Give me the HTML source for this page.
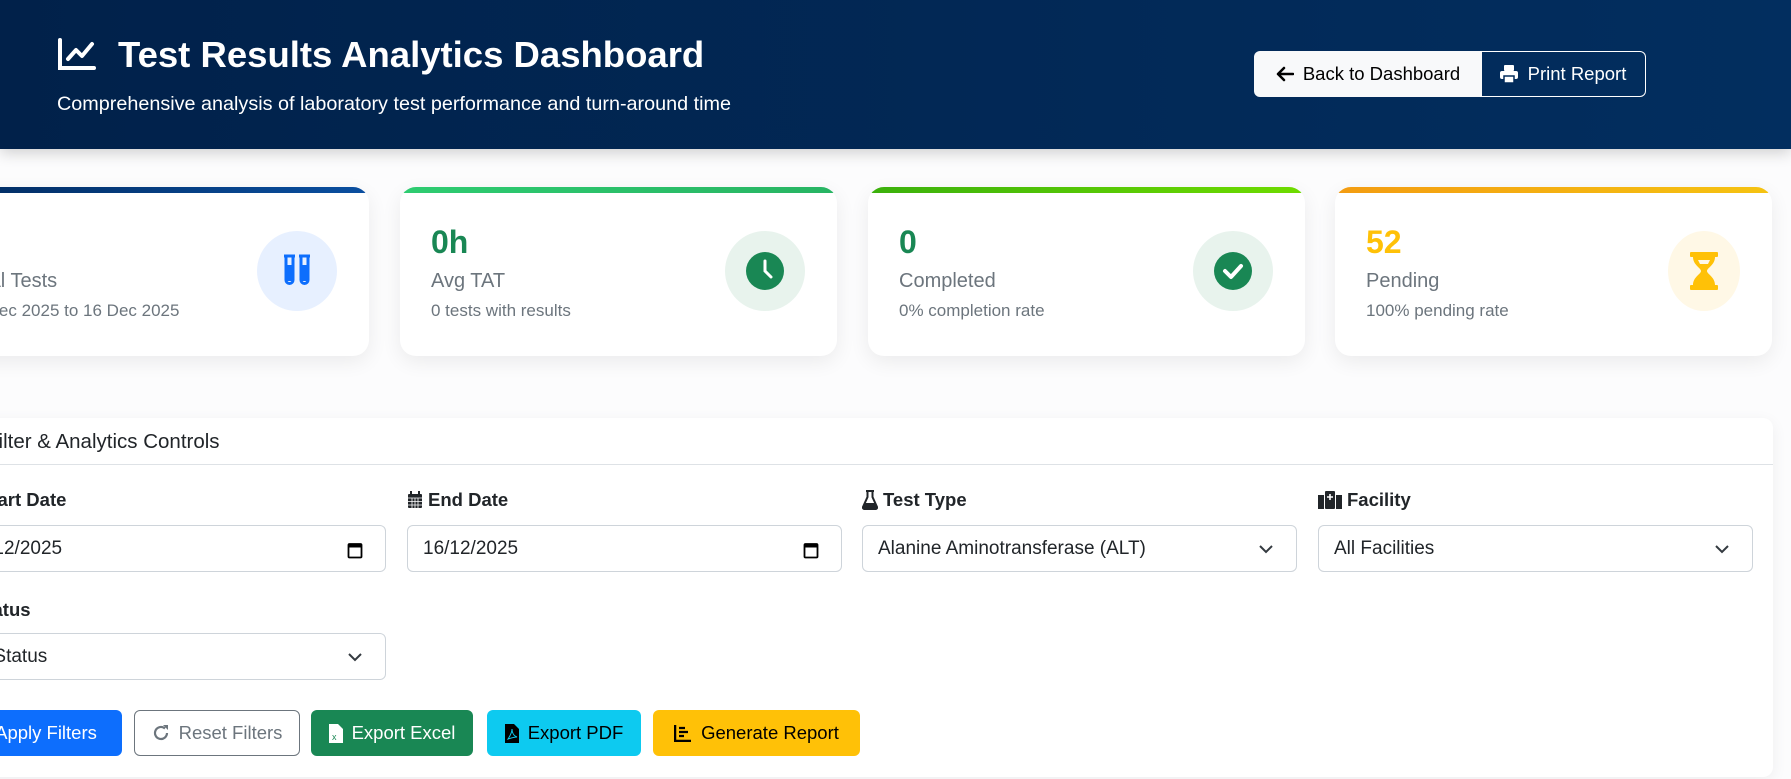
<!DOCTYPE html>
<html><head><meta charset="utf-8"><style>
*{box-sizing:border-box;margin:0;padding:0}
body{width:1791px;height:779px;overflow:hidden;background:#fcfcfd;font-family:"Liberation Sans",sans-serif;color:#212529;position:relative}
.hdr{position:absolute;left:0;top:0;width:1791px;height:149px;background:linear-gradient(90deg,#01214a,#022e5f);box-shadow:0 4px 14px rgba(0,0,0,.18)}
.abs{position:absolute}
.title{left:118px;top:34px;font-size:36.5px;font-weight:bold;color:#fff;white-space:nowrap}
.sub{left:57px;top:93px;font-size:19.8px;color:#fff;white-space:nowrap}
.btn{position:absolute;height:46px;display:flex;align-items:center;justify-content:center;font-size:18.5px;border-radius:6px;white-space:nowrap;gap:9px}
.card{position:absolute;top:187px;width:437px;height:169px;background:#fff;border-radius:16px;box-shadow:0 6px 20px rgba(0,0,0,.07);overflow:hidden}
.card .bar{position:absolute;left:0;top:0;right:0;height:6px}
.card .v{position:absolute;left:31px;top:37px;font-size:32px;font-weight:bold}
.card .l{position:absolute;left:31px;top:83px;font-size:20px;color:#6c757d}
.card .s{position:absolute;left:31px;top:114px;font-size:17px;color:#6c757d;white-space:nowrap}
.card .ic{position:absolute;right:32px;top:44px;width:80px;height:80px;border-radius:50%;display:flex;align-items:center;justify-content:center}
.fc{position:absolute;left:-30px;top:418px;width:1803px;height:359px;background:#fff;border-radius:10px;box-shadow:0 4px 16px rgba(0,0,0,.06)}
.lbl{position:absolute;font-size:18.5px;font-weight:bold;white-space:nowrap;display:flex;align-items:center;gap:5px}
.inp{position:absolute;height:47px;width:435px;border:1px solid #ced4da;border-radius:6px;background:#fff;font-size:19px;display:flex;align-items:center;padding-left:15px}
.inp svg{position:absolute;right:22px;top:15px}
</style></head><body>
<div class="hdr">
  <svg class="abs" style="left:57px;top:38px" width="40" height="34" viewBox="0 0 40 34"><path d="M3 2v28h34" stroke="#fff" stroke-width="4" fill="none" stroke-linecap="round"/><path d="M11 21l8-9 6 6 10-12" stroke="#fff" stroke-width="4" fill="none" stroke-linecap="round" stroke-linejoin="round"/></svg>
  <div class="abs title">Test Results Analytics Dashboard</div>
  <div class="abs sub">Comprehensive analysis of laboratory test performance and turn-around time</div>
  <div class="btn" style="left:1254px;top:51px;width:228px;background:#f8f9fa;color:#000;border-radius:6px 0 0 6px"><svg width="18" height="16" viewBox="0 0 18 16"><path d="M8 2L2 8l6 6M2 8h15" stroke="#000" stroke-width="2.5" fill="none" stroke-linecap="round" stroke-linejoin="round"/></svg>Back to Dashboard</div>
  <div class="btn" style="left:1480px;top:51px;width:166px;border:1px solid #fff;border-left:none;color:#fff;border-radius:0 6px 6px 0"><svg width="20" height="20" viewBox="0 0 20 20"><rect x="5" y="1" width="10" height="6" rx="1" fill="#fff"/><rect x="1" y="7" width="18" height="8" rx="2" fill="#fff"/><rect x="5" y="12" width="10" height="7" fill="#fff" stroke="#012a5a" stroke-width="1.5"/></svg>Print Report</div>
</div>

<div class="card" style="left:-68px"><div class="bar" style="background:linear-gradient(90deg,#012a5e,#0a4fa0)"></div>
<div class="v" style="color:#0d6efd">52</div><div class="l">Total Tests</div><div class="s">01 Dec 2025 to 16 Dec 2025</div>
<div class="ic" style="background:#e7f0ff"><svg width="36" height="36" viewBox="0 0 36 36"><path d="M5 3h11M7 3v24a3.5 3.5 0 007 0V3M20 3h11M22 3v24a3.5 3.5 0 007 0V3" stroke="#0d6efd" stroke-width="3" fill="none"/><rect x="8" y="12" width="5" height="16" fill="#0d6efd"/><rect x="23" y="12" width="5" height="16" fill="#0d6efd"/></svg></div></div>

<div class="card" style="left:400px"><div class="bar" style="background:linear-gradient(90deg,#2ecc71,#28b463)"></div>
<div class="v" style="color:#198754">0h</div><div class="l">Avg TAT</div><div class="s">0 tests with results</div>
<div class="ic" style="background:#e8f3ed"><svg width="40" height="40" viewBox="0 0 40 40"><circle cx="20" cy="20" r="19" fill="#198754"/><path d="M20 10v10l6 6" stroke="#fff" stroke-width="3" fill="none" stroke-linecap="round"/></svg></div></div>

<div class="card" style="left:868px"><div class="bar" style="background:linear-gradient(90deg,#3bb00c,#6fdc00)"></div>
<div class="v" style="color:#198754">0</div><div class="l">Completed</div><div class="s">0% completion rate</div>
<div class="ic" style="background:#e8f3ed"><svg width="40" height="40" viewBox="0 0 40 40"><circle cx="20" cy="20" r="19" fill="#198754"/><path d="M12 20l6 6 10-11" stroke="#fff" stroke-width="4" fill="none" stroke-linecap="round" stroke-linejoin="round"/></svg></div></div>

<div class="card" style="left:1335px"><div class="bar" style="background:linear-gradient(90deg,#f39c12,#f5c312)"></div>
<div class="v" style="color:#ffc107">52</div><div class="l">Pending</div><div class="s">100% pending rate</div>
<div class="ic" style="background:#fff8e6;width:72px;height:80px"><svg width="30" height="40" viewBox="0 0 30 40"><rect x="1" y="1" width="28" height="5" rx="1" fill="#ffc107"/><rect x="1" y="34" width="28" height="5" rx="1" fill="#ffc107"/><path d="M4 6h22c0 8-8 11-8 14s8 6 8 14H4c0-8 8-11 8-14S4 14 4 6z" fill="#ffc107"/><path d="M9 9h12l-2 4h-8z" fill="#fff8e6"/></svg></div></div>

<div class="fc">
  <div class="abs" style="left:16px;top:12px;font-size:20.5px;color:#212529">Filter &amp; Analytics Controls</div>
  <div class="abs" style="left:0;top:46px;width:1803px;height:1px;background:#dee2e6"></div>
</div>

<div class="lbl" style="left:-42px;top:489px"><svg width="16" height="18" viewBox="0 0 16 18"><rect x="1" y="3" width="14" height="14" fill="#212529"/></svg>Start Date</div>
<div class="lbl" style="left:407px;top:489px"><svg width="16" height="18" viewBox="0 0 16 18"><rect x="1" y="3" width="14" height="14" rx="1" fill="#212529"/><rect x="3" y="0" width="2" height="4" fill="#212529"/><rect x="11" y="0" width="2" height="4" fill="#212529"/><path d="M1 7h14M1 10.5h14M1 14h14M5 7v10M8 7v10M11 7v10" stroke="#fff" stroke-width=".8"/></svg>End Date</div>
<div class="lbl" style="left:862px;top:489px"><svg width="16" height="20" viewBox="0 0 16 20"><path d="M4 1h8M5.5 1v6L1 17a1.5 1.5 0 001.5 2h11a1.5 1.5 0 001.5-2L10.5 7V1" stroke="#212529" stroke-width="2" fill="none"/><path d="M3 13h10l2 5H1z" fill="#212529"/></svg>Test Type</div>
<div class="lbl" style="left:1318px;top:489px"><svg width="24" height="18" viewBox="0 0 24 18"><rect x="0" y="4" width="6" height="14" fill="#212529"/><rect x="7" y="0" width="10" height="18" rx="1" fill="#212529"/><rect x="18" y="4" width="6" height="14" fill="#212529"/><path d="M12 3v6M9 6h6" stroke="#fff" stroke-width="1.6"/></svg>Facility</div>

<div class="inp" style="left:-49px;top:525px">01/12/2025<svg width="16" height="18" viewBox="0 0 16 18"><rect x="1.5" y="3" width="13" height="13.5" rx="1" stroke="#000" stroke-width="1.8" fill="none"/><rect x="1.5" y="3" width="13" height="3.5" fill="#000"/></svg></div>
<div class="inp" style="left:407px;top:525px">16/12/2025<svg width="16" height="18" viewBox="0 0 16 18"><rect x="1.5" y="3" width="13" height="13.5" rx="1" stroke="#000" stroke-width="1.8" fill="none"/><rect x="1.5" y="3" width="13" height="3.5" fill="#000"/></svg></div>
<div class="inp" style="left:862px;top:525px">Alanine Aminotransferase (ALT)<svg width="16" height="16" viewBox="0 0 16 16"><path d="M2 5l6 6 6-6" stroke="#343a40" stroke-width="2" fill="none"/></svg></div>
<div class="inp" style="left:1318px;top:525px">All Facilities<svg width="16" height="16" viewBox="0 0 16 16"><path d="M2 5l6 6 6-6" stroke="#343a40" stroke-width="2" fill="none"/></svg></div>

<div class="lbl" style="left:-26px;top:599px">Status</div>
<div class="inp" style="left:-49px;top:633px">All Status<svg width="16" height="16" viewBox="0 0 16 16"><path d="M2 5l6 6 6-6" stroke="#343a40" stroke-width="2" fill="none"/></svg></div>

<div class="btn" style="left:-30px;top:710px;width:152px;background:#0d6efd;color:#fff">Apply Filters</div>
<div class="btn" style="left:134px;top:710px;width:166px;border:1px solid #6c757d;color:#6c757d"><svg width="18" height="18" viewBox="0 0 18 18"><path d="M15 9a6 6 0 11-2-4.5" stroke="#6c757d" stroke-width="2.2" fill="none"/><path d="M11 1h5v5z" fill="#6c757d"/></svg>Reset Filters</div>
<div class="btn" style="left:311px;top:710px;width:162px;background:#198754;color:#fff"><svg width="14" height="19" viewBox="0 0 14 19"><path d="M0 0h9l5 5v14H0z" fill="#fff"/><text x="3" y="16" font-size="9" fill="#198754" font-family="Liberation Sans">x</text></svg>Export Excel</div>
<div class="btn" style="left:487px;top:710px;width:154px;background:#0dcaf0;color:#000"><svg width="14" height="19" viewBox="0 0 14 19"><path d="M0 0h9l5 5v14H0z" fill="#000"/><path d="M3 15c2-3 4-7 4-10 0 4 2 7 5 8-3 0-6 1-9 2z" stroke="#0dcaf0" stroke-width="1" fill="none"/></svg>Export PDF</div>
<div class="btn" style="left:653px;top:710px;width:207px;background:#ffc107;color:#000"><svg width="18" height="18" viewBox="0 0 18 18"><path d="M1 1v16h16" stroke="#000" stroke-width="2.5" fill="none"/><path d="M5 4h6M5 8h9M5 12h5" stroke="#000" stroke-width="2.2"/></svg>Generate Report</div>
</body></html>
